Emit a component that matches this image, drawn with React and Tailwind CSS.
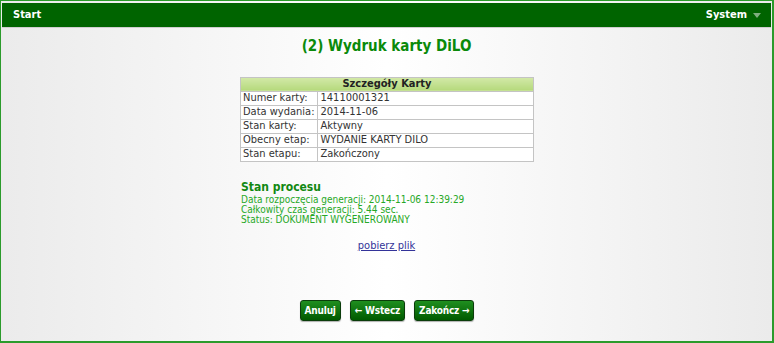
import React from 'react'

const font = { fontFamily: '"DejaVu Sans Condensed", "DejaVu Sans", sans-serif' }

const rows = [
  ['Numer karty:', '14110001321'],
  ['Data wydania:', '2014-11-06'],
  ['Stan karty:', 'Aktywny'],
  ['Obecny etap:', 'WYDANIE KARTY DILO'],
  ['Stan etapu:', 'Zakończony'],
]

const Btn = ({ children }) => (
  <button className="h-[21px] px-[4px] rounded-[3px] border border-[#0b3d0b] bg-linear-to-b from-[#1f8f1f] to-[#005a00] text-white text-[10px] font-bold tracking-[-0.2px] whitespace-nowrap shadow-[0_1px_1px_rgba(0,0,0,0.3)]">
    {children}
  </button>
)

export default function App() {
  return (
    <div
      className="w-[774px] h-[343px] border-l border-t border-r-2 border-b-2 border-[#2b9b2b] bg-linear-to-r from-[#ebebeb] via-white to-[#ebebeb] flex flex-col"
      style={font}
    >
      {/* Header */}
      <div className="mt-[2px] mx-[1px] h-[25px] bg-[#006400] border-b border-[#cfcfcf] flex items-center justify-between pl-[11px] pr-[10px] text-white text-[11px] font-bold">
        <span>Start</span>
        <span className="flex items-center gap-[6px]">
          System
          <svg width="8" height="5" viewBox="0 0 8 5">
            <path d="M0 0 L8 0 L4 5 Z" fill="#7fae7f" />
          </svg>
        </span>
      </div>

      <h1 className="mt-[7px] text-center text-[15px] font-bold text-[#0a8a0a]">(2) Wydruk karty DiLO</h1>

      {/* Table */}
      <table className="mt-[19px] ml-[239px] w-[294px] border-collapse text-[11px] text-[#333]">
        <thead>
          <tr>
            <th colSpan={2} className="h-[14px] border border-[#c4c4c4] bg-linear-to-b from-[#d3e9a8] to-[#b5d97c] text-center font-bold text-[#222] leading-[12px] p-0">
              Szczegóły Karty
            </th>
          </tr>
        </thead>
        <tbody className="bg-white">
          {rows.map(([k, v]) => (
            <tr key={k}>
              <td className="w-[73px] h-[14px] border border-[#c4c4c4] px-[2px] py-0 leading-[12px] whitespace-nowrap">{k}</td>
              <td className="h-[14px] border border-[#c4c4c4] px-[3px] py-0 leading-[12px] whitespace-nowrap">{v}</td>
            </tr>
          ))}
        </tbody>
      </table>

      {/* Process */}
      <div className="mt-[19px] ml-[240px] text-[10px] leading-[10px] text-[#26a826]">
        <div className="mb-[1px] text-[12px] font-bold text-[#118811] leading-[13px]">Stan procesu</div>
        <div>Data rozpoczęcia generacji: 2014-11-06 12:39:29</div>
        <div>Całkowity czas generacji: 5.44 sec.</div>
        <div>Status: DOKUMENT WYGENEROWANY</div>
      </div>

      <div className="mt-[15px] text-center text-[11px] leading-[12px]">
        <a href="#" className="underline text-[#333399]">pobierz plik</a>
      </div>

      <div className="mt-[48px] flex justify-center gap-[9px] pl-[1px]">
        <Btn>Anuluj</Btn>
        <Btn>← Wstecz</Btn>
        <Btn>Zakończ →</Btn>
      </div>
    </div>
  )
}
